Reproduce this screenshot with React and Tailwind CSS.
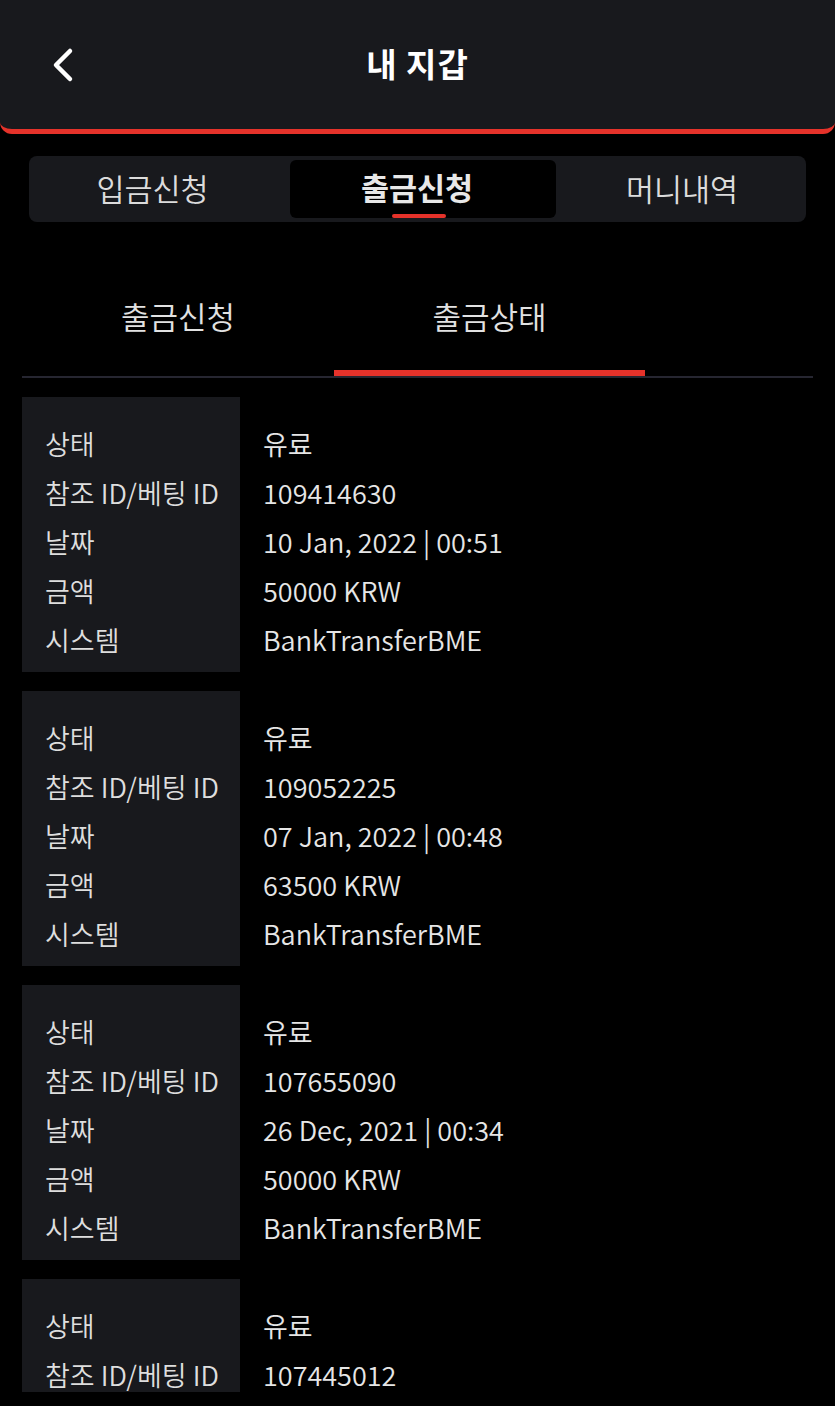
const records = [
  { id: '109414630', date: '10 Jan, 2022 | 00:51', amount: '50000 KRW' },
  { id: '109052225', date: '07 Jan, 2022 | 00:48', amount: '63500 KRW' },
  { id: '107655090', date: '26 Dec, 2021 | 00:34', amount: '50000 KRW' },
  { id: '107445012', date: '21 Dec, 2021 | 01:12', amount: '50000 KRW' },
];

const labels = ['상태', '참조 ID/베팅 ID', '날짜', '금액', '시스템'];

function RecordCard({ item }) {
  const values = ['유료', item.id, item.date, item.amount, 'BankTransferBME'];
  return (
    <div className="flex h-[275px] shrink-0">
      <div className="w-[218px] bg-[#18191d] pl-[23px] pt-[22px]">
        {labels.map((l) => (
          <div key={l} className="h-[49px] leading-[49px] text-[27px] font-[350] text-[#dedede] whitespace-nowrap">
            {l}
          </div>
        ))}
      </div>
      <div className="pl-[23px] pt-[22px]">
        {values.map((v, i) => (
          <div key={i} className="h-[49px] leading-[49px] text-[27px] font-[350] text-[#e6e6e6] whitespace-nowrap">
            {v}
          </div>
        ))}
      </div>
    </div>
  );
}

export default function App() {
  return (
    <div
      className="w-[835px] h-[1406px] bg-black overflow-hidden"
      style={{ fontFamily: '"Noto Sans CJK KR", "Noto Sans", sans-serif' }}
    >
      {/* header */}
      <div className="h-[134px] bg-[#18191d] rounded-b-[12px] border-b-[5px] border-[#e5322a] relative flex items-center justify-center">
        <svg className="absolute left-[48px] top-[47px]" width="28" height="36" viewBox="0 0 28 36">
          <polyline points="22,4 8,18 22,32" fill="none" stroke="#fff" strokeWidth="4.5" strokeLinecap="round" strokeLinejoin="round" />
        </svg>
        <h1 className="text-[33px] font-bold text-white leading-none -mt-[2px] tracking-[1px]">내 지갑</h1>
      </div>

      {/* segmented tabs */}
      <div className="mx-[29px] mt-[22px] h-[66px] bg-[#18191d] rounded-[8px] flex py-[4px]">
        <div className="w-[261px] pr-[14px] flex items-center justify-center text-[30.5px] font-[350] text-[#dcdcdc]">입금신청</div>
        <div className="w-[266px] pr-[12px] bg-black rounded-[6px] flex flex-col items-center justify-center relative">
          <span className="text-[30.5px] font-bold text-[#e8e8e8] leading-none -mt-[4px]">출금신청</span>
          <span className="absolute bottom-0 left-[102px] w-[54px] h-[4px] rounded-full bg-[#e5322a]" />
        </div>
        <div className="flex-1 pl-[2px] flex items-center justify-center text-[30.5px] font-[350] text-[#dcdcdc]">머니내역</div>
      </div>

      {/* sub tabs */}
      <div className="mx-[22px] flex border-b-2 border-[#262631]">
        <div className="w-[312px] pt-[76px] pb-[42px] text-center text-[31px] font-[350] leading-[36px] text-[#e2e2e2]">출금신청</div>
        <div className="w-[311px] flex flex-col">
          <div className="pt-[76px] pb-[36px] text-center text-[31px] font-[350] leading-[36px] text-[#e2e2e2]">출금상태</div>
          <div className="h-[6px] bg-[#e5322a]" />
        </div>
      </div>

      {/* list */}
      <div className="mx-[22px] mt-[19px] h-[995px] overflow-hidden flex flex-col gap-[19px]">
        {records.map((r) => (
          <RecordCard key={r.id} item={r} />
        ))}
      </div>
    </div>
  );
}
